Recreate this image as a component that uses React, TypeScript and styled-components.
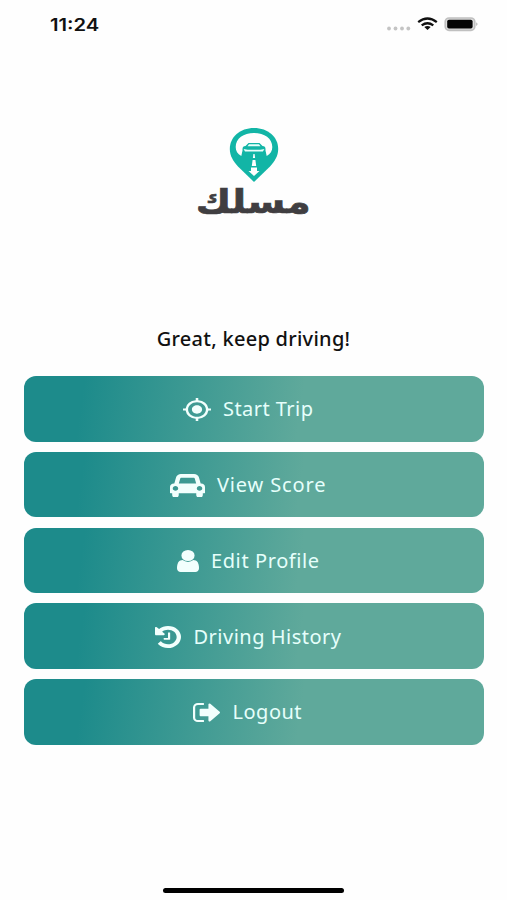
import React from "react";
import styled, { createGlobalStyle } from "styled-components";

const GlobalStyle = createGlobalStyle`
  * { box-sizing: border-box; }
  body { margin: 0; background: #fefefe; }
`;

const Screen = styled.main`
  width: 507px;
  height: 900px;
  display: flex;
  flex-direction: column;
  overflow: hidden;
  background: #fefefe;
  font-family: "Noto Sans", "Open Sans", sans-serif;
`;

const StatusBar = styled.header`
  height: 48px;
  flex: none;
  display: flex;
  align-items: center;
  justify-content: space-between;
  padding: 0 29px 0 50px;
`;

const Clock = styled.time`
  font: 600 17px/20px Inter, sans-serif;
  color: #111;
  white-space: nowrap;
  padding-top: 1px;
  transform: scaleX(1.19);
  transform-origin: left center;
`;

const StatusIcons = styled.svg`
  width: 92px;
  height: 20px;
  display: block;
`;

const Brand = styled.section`
  height: 272px;
  flex: none;
  padding-top: 79px;
  display: flex;
  flex-direction: column;
  align-items: center;
`;

const Pin = styled.svg`
  width: 50px;
  height: 56px;
  flex: none;
`;

const Wordmark = styled.div`
  font: 700 33px/40px "DejaVu Sans", sans-serif;
  color: #403e41;
  -webkit-text-stroke: 0.7px #403e41;
  white-space: nowrap;
  margin-top: -1px;
  transform: scaleX(1.17);
`;

const Message = styled.h1`
  margin: 0;
  height: 56px;
  padding-top: 5px;
  text-align: center;
  font-size: 20px;
  line-height: 27px;
  font-weight: 500;
  letter-spacing: 0.27px;
  color: #111;
`;

const Menu = styled.nav`
  display: flex;
  flex-direction: column;
  gap: 10.2px;
  padding: 0 23.5px 0 24px;
`;

const MenuButton = styled.button`
  height: 65.6px;
  width: 100%;
  border: 0;
  border-radius: 12px;
  padding: 1px 12px 0 0;
  display: flex;
  align-items: center;
  justify-content: center;
  gap: 12.5px;
  color: #e6fffb;
  font-family: inherit;
  font-size: 20px;
  line-height: 28px;
  text-align: left;
  background: linear-gradient(98deg, #1d8b8b 13%, #5fa99b 60%);
`;

const Icon = styled.svg<{ $w: number; $h: number }>`
  width: ${(p) => p.$w}px;
  height: ${(p) => p.$h}px;
  flex: none;
  fill: #f2fffd;
`;

const Label = styled.span<{ $w: number; $track: number }>`
  width: ${(p) => p.$w}px;
  letter-spacing: ${(p) => p.$track}px;
  white-space: nowrap;
`;

const HomeArea = styled.footer`
  margin-top: auto;
  height: 12.5px;
  flex: none;
  display: flex;
  justify-content: center;
`;

const HomeIndicator = styled.div`
  width: 181px;
  height: 5px;
  border-radius: 3px;
  background: #000;
`;

const items = [
  {
    label: "Start Trip", width: 90, track: 0.45, w: 28, h: 23, box: "1 1 22 22",
    d: "M12 8c-2.21 0-4 1.79-4 4s1.79 4 4 4 4-1.79 4-4-1.79-4-4-4zm8.94 3A8.994 8.994 0 0 0 13 3.06V1h-2v2.06A8.994 8.994 0 0 0 3.06 11H1v2h2.06A8.994 8.994 0 0 0 11 20.94V23h2v-2.06A8.994 8.994 0 0 0 20.94 13H23v-2h-2.06zM12 19c-3.87 0-7-3.13-7-7s3.13-7 7-7 7 3.13 7 7-3.13 7-7 7z",
  },
  {
    label: "View Score", width: 109, track: 0.85, w: 35, h: 23, box: "0 128 2048 1536",
    d: "M480 1088q0-66-47-113t-113-47-113 47-47 113 47 113 113 47 113-47 47-113zm36-320h1016l-89-357q-2-8-14-17.5t-21-9.5h-768q-9 0-21 9.5t-14 17.5zm1372 320q0-66-47-113t-113-47-113 47-47 113 47 113 113 47 113-47 47-113zm160-96v384q0 14-9 23t-23 9h-96v128q0 80-56 136t-136 56-136-56-56-136v-128h-1024v128q0 80-56 136t-136 56-136-56-56-136v-128h-96q-14 0-23-9t-9-23v-384q0-93 65.5-158.5t158.5-65.5h28l105-419q23-94 104-157.5t179-63.5h768q98 0 179 63.5t104 157.5l105 419h28q93 0 158.5 65.5t65.5 158.5z",
  },
  {
    label: "Edit Profile", width: 108, track: 0.6, w: 22, h: 22, box: "256 128 1280 1536",
    d: "M1536 1399q0 109-62.5 187t-150.5 78h-854q-88 0-150.5-78t-62.5-187q0-85 8.5-160.5t31.5-152 58.5-131 94-89 134.5-34.5q131 128 313 128t313-128q76 0 134.5 34.5t94 89 58.5 131 31.5 152 8.5 160.5zm-256-887q0 159-112.5 271.5t-271.5 112.5-271.5-112.5-112.5-271.5 112.5-271.5 271.5-112.5 271.5 112.5 112.5 271.5z",
  },
  {
    label: "Driving History", width: 147, track: 0.5, w: 26, h: 22, box: "128 128 1536 1536",
    d: "M1664 896q0 156-61 298t-164 245-245 164-298 61q-172 0-327-72.5t-264-204.5q-7-10-6.5-22.5t8.5-20.5l137-138q10-9 25-9 16 2 23 12 73 95 179 147t225 52q104 0 198.5-40.5t163.5-109.5 109.5-163.5 40.5-198.5-40.5-198.5-109.5-163.5-163.5-109.5-198.5-40.5q-98 0-188 35.5t-160 101.5l137 138q31 30 14 69-17 40-59 40h-448q-26 0-45-19t-19-45v-448q0-42 40-59 39-17 69 14l130 129q107-101 244.5-156.5t284.5-55.5q156 0 298 61t245 164 164 245 61 298zm-640-288v448q0 14-9 23t-23 9h-320q-14 0-23-9t-9-23v-64q0-14 9-23t23-9h224v-352q0-14 9-23t23-9h64q14 0 23 9t9 23z",
  },
  {
    label: "Logout", width: 70, track: 0.5, w: 27, h: 19, box: "64 256 1568 1280",
    d: "M704 1440q0 4 1 20t.5 26.5-3 23.5-10 19.5-20.5 6.5h-320q-119 0-203.5-84.5t-84.5-203.5v-704q0-119 84.5-203.5t203.5-84.5h320q13 0 22.5 9.5t9.5 22.5q0 4 1 20t.5 26.5-3 23.5-10 19.5-20.5 6.5h-320q-66 0-113 47t-47 113v704q0 66 47 113t113 47h312l11.5 1 11.5 3 8 5.5 7 9 2 13.5zm928-544q0 26-19 45l-544 544q-19 19-45 19t-45-19-19-45v-288h-448q-26 0-45-19t-19-45v-384q0-26 19-45t45-19h448v-288q0-26 19-45t45-19 45 19l544 544q19 19 19 45z",
  },
];

export default function App() {
  return (
    <>
      <GlobalStyle />
      <Screen>
        <StatusBar>
          <Clock>11:24</Clock>
          <StatusIcons viewBox="0 0 92 20">
            <g fill="#c4c4c4">
              <circle cx="3" cy="14.5" r="1.9" />
              <circle cx="9.5" cy="14.5" r="1.9" />
              <circle cx="16" cy="14.5" r="1.9" />
              <circle cx="22.3" cy="14.5" r="1.9" />
            </g>
            <g fill="none" stroke="#111" strokeWidth="2.3">
              <path d="M32.2 8.1Q41.5 1 50.8 8.1" />
              <path d="M35.7 11.4Q41.5 7 47.3 11.4" />
            </g>
            <path d="M38.3 13.1Q41.5 10.9 44.7 13.1L41.5 16Z" fill="#111" />
            <rect x="59.2" y="4" width="29.6" height="12.4" rx="3.8" fill="#ddd" stroke="#c0c0c0" strokeWidth="1.6" />
            <rect x="61.2" y="5.8" width="25.4" height="8.8" rx="1.8" fill="#050505" />
            <path d="M90.300 8.200q2.400 1.900 0 3.800z" fill="#aaa" />
          </StatusIcons>
        </StatusBar>
        <Brand>
          <Pin viewBox="0 0 50 56">
            <path d="M25 1C11 1 .8 10 .8 22c0 7 3.500 12 8.200 17.500L25 55l16-15.500C45.700 34 49.200 29 49.200 22 49.200 10 39 1 25 1z" fill="#12b5a6" />
            <path d="M12.300 29C8.500 27 6.700 24 6.700 20 6.700 11.500 14.500 6 25 6s18.300 5.500 18.300 14c0 4-1.800 7-5.600 9l-1-4.500H13.300z" fill="#fefefe" />
            <path d="M13.500 22q0-3 3-3l3-3h11l3 3q3 0 3 3v4q0 1.500-1.500 1.500h-20q-1.500 0-1.500-1.500z" fill="#12b5a6" />
            <path d="M20 17.300h10l1.500 1.900h-13zM14.600 22l4 .8h12.800l4-.8-1.500 2.500H16z" fill="#e8fffb" />
            <path d="M24.400 27h1.200l.5 4h-2.200zM23.600 33h2.800l.8 6h-4.400zM22 40.500h6v3.500h2.500L25 49 19.500 44H22z" fill="#fefefe" />
          </Pin>
          <Wordmark dir="rtl" lang="ar">مسلك</Wordmark>
        </Brand>
        <Message>Great, keep driving!</Message>
        <Menu>
          {items.map((item) => (
            <MenuButton key={item.label}>
              <Icon $w={item.w} $h={item.h} viewBox={item.box} preserveAspectRatio="none" aria-hidden>
                <path d={item.d} />
              </Icon>
              <Label $w={item.width} $track={item.track}>{item.label}</Label>
            </MenuButton>
          ))}
        </Menu>
        <HomeArea><HomeIndicator /></HomeArea>
      </Screen>
    </>
  );
}
